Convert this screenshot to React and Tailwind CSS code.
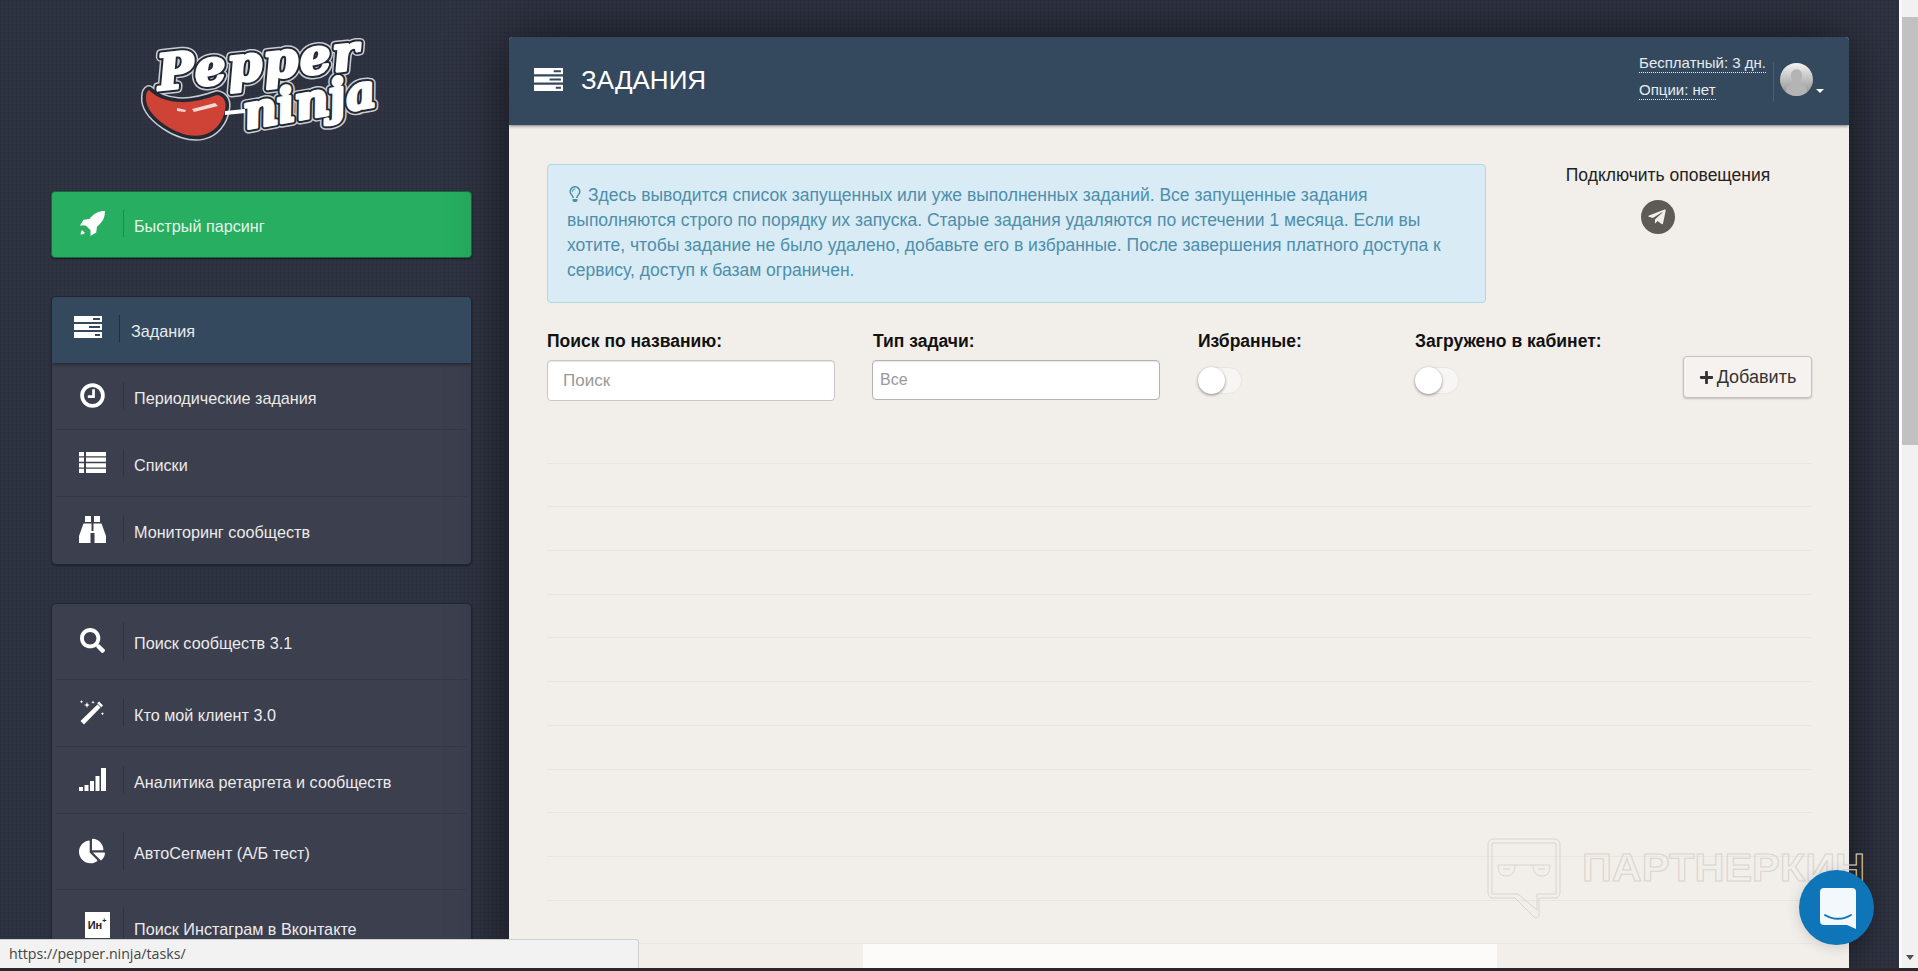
import { FaSearch, FaChartPie, FaRegLightbulb, FaTelegramPlane, FaPlus } from 'react-icons/fa';

const font = { fontFamily: '"Liberation Sans", Arial, sans-serif' };

// glyphicon-tasks
const TasksIcon = ({ className }) => (
    <svg viewBox="0 0 28 22" className={className} fill="currentColor">
        <path fillRule="evenodd" d="M0 0h28v6H0zM19 2v2h7V2zM0 8h28v6H0zM15 10v2h11v-2zM0 16h28v6H0zM21 18v2h5v-2z" />
    </svg>
);

const ClockIcon = ({ className }) => (
    <svg viewBox="0 0 24 24" className={className} fill="none" stroke="currentColor">
        <circle cx="12" cy="12" r="10" strokeWidth="3.6" />
        <path d="M13 6v7H7.5" strokeWidth="2.6" />
    </svg>
);

const ListIcon = ({ className }) => (
    <svg viewBox="0 0 27 21" className={className} fill="currentColor">
        <path d="M0 0h5v4.200H0zM7 0h20v4.200H7zM0 5.600h5v4.200H0zM7 5.600h20v4.200H7zM0 11.200h5v4.200H0zM7 11.200h20v4.200H7zM0 16.800h5V21H0zM7 16.800h20V21H7z" />
    </svg>
);

const BinocularsIcon = ({ className }) => (
    <svg viewBox="0 0 27 27" className={className} fill="currentColor">
        <path d="M6 0h6v6H6zM15 0h6v6h-6zM4.500 7.500h8V15h2V7.500h8L27 20v7H15.500V17h-4v10H0v-7z" />
    </svg>
);

const RocketIcon = ({ className }) => (
    <svg viewBox="0 0 25 25" className={className} fill="currentColor">
        <path d="M25 0c-6.500 0-11.500 2.500-15.500 8L3.500 8.800 0 14.500h5.800l4.700 4.700v5.800l5.700-3.500.8-6C22.500 11.500 25 6.500 25 0zM2 19c-1 1.500-1.500 3-1.500 4.500C2 23.500 3.500 23 5 22z" />
    </svg>
);

const MagicIcon = ({ className }) => (
    <svg viewBox="0 0 25 25" className={className} fill="currentColor">
        <path d="M17.500 4.500l3 3L4 24.500l-3.500-3.500z" />
        <path d="M19 1.500l4 4-1.800 1.800-4-4z" />
        <path d="M7 2l.8 2.200L10 5l-2.200.8L7 8l-.8-2.200L4 5l2.200-.8zM1.500 0l.5 1.300 1.300.5-1.300.5-.5 1.300L1 2.300-.3 1.800 1 1.300zM13 .5l.5 1.300 1.300.5-1.300.5-.5 1.300-.5-1.300-1.300-.5 1.300-.5zM22.500 12l.5 1.300 1.300.5-1.300.5-.5 1.300-.5-1.300-1.300-.5 1.300-.5z" />
    </svg>
);

const SignalIcon = ({ className }) => (
    <svg viewBox="0 0 27 23" className={className} fill="currentColor">
        <rect x="0" y="19" width="4" height="4" />
        <rect x="5.500" y="17" width="4" height="6" />
        <rect x="11" y="13" width="4" height="10" />
        <rect x="16.500" y="8" width="4" height="15" />
        <rect x="22" y="0" width="5" height="23" />
    </svg>
);

const InstaIcon = () => (
    <div className="w-[25px] h-[26px] bg-white text-[#222] text-[11px] font-bold flex items-center justify-center ml-[10px] -mt-[3px]">
        Ин<span className="text-[7px] -mt-2">+</span>
    </div>
);

const mainRows = [
    { title: 'Периодические задания', icon: <ClockIcon className="w-[25px] h-[25px]" /> },
    { title: 'Списки', icon: <ListIcon className="w-[27px] h-[21px]" /> },
    { title: 'Мониторинг сообществ', icon: <BinocularsIcon className="w-[27px] h-[27px]" /> },
];

const toolRows = [
    { title: 'Поиск сообществ 3.1', h: 'h-[76px]', bar: 'h-[38px]', icon: <FaSearch className="w-[25px] h-[25px]" /> },
    { title: 'Кто мой клиент 3.0', h: 'h-[67px]', bar: 'h-[27px]', icon: <MagicIcon className="w-[25px] h-[25px]" /> },
    { title: 'Аналитика ретаргета и сообществ', h: 'h-[67px]', bar: 'h-[27px]', icon: <SignalIcon className="w-[27px] h-[23px]" /> },
    { title: 'АвтоСегмент (А/Б тест)', h: 'h-[76px]', bar: 'h-[38px]', icon: <FaChartPie className="w-[26px] h-[26px]" /> },
    { title: 'Поиск Инстаграм в Вконтакте', h: 'h-[76px]', bar: 'h-[38px]', icon: <InstaIcon /> },
];

const Row = ({ title, icon, h = 'h-[67px]', bar = 'h-[27px]', last }) => (
    <div className={`${h} flex items-center pl-[20px] relative`}>
        <div className="w-[40px] flex justify-center text-white -mt-[3px]">{icon}</div>
        <div className={`${bar} w-px bg-[#31333f] ml-[11px] -mt-[3px]`}></div>
        <span className="ml-[10px] pt-[3px] text-[16.2px] text-[#ebebeb]">{title}</span>
        {!last && <div className="absolute left-[4px] right-[4px] bottom-0 h-px bg-[#343745]"></div>}
    </div>
);

const Sidebar = () => (
    <aside className="w-[509px] shrink-0 pl-[51px] pr-[37px] pt-[30px] overflow-hidden">
        <div className="h-[120px] ml-[79px] mb-[41px]">
            <svg viewBox="0 0 260 120" className="w-[260px] h-[120px]" style={{ fontFamily: '"DejaVu Serif", serif' }}>
                <defs>
                    <text id="logo-pepper" x="29" y="60" fontSize="49" fontWeight="700" fontStyle="italic" transform="rotate(-6 29 60)" textLength="202">Pepper</text>
                    <text id="logo-ninja" x="116" y="99" fontSize="47" fontWeight="700" fontStyle="italic" transform="rotate(-10 116 99)" textLength="134">ninja</text>
                    <path id="logo-chili" d="M19 60C25 66 34 71 48 72C62 73 76 69 87 65C94 66 97 72 95 80C93 92 85 102 73 105C60 108 45 102 35 95C25 88 15 78 16 67C16 63 17 61 19 60Z" />
                </defs>
                <g stroke="#c9cdd3" strokeWidth="10" strokeLinejoin="round" fill="#c9cdd3">
                    <use href="#logo-pepper" /><use href="#logo-ninja" /><use href="#logo-chili" />
                </g>
                <g stroke="#232835" strokeWidth="7" strokeLinejoin="round" fill="#232835">
                    <use href="#logo-pepper" /><use href="#logo-ninja" /><use href="#logo-chili" />
                </g>
                <use href="#logo-chili" fill="#cf4337" />
                <g fill="#fff" stroke="#fff" strokeWidth="3" strokeLinejoin="round">
                    <use href="#logo-pepper" /><use href="#logo-ninja" />
                </g>
                <path d="M47 78l9 2-1 2-8-1zM62 79l23-6 3 3-24 6z" fill="#f6d9d2" />
                <path d="M95 81l20-2v4l-20 2z" fill="#fff" />
            </svg>
        </div>

        <div className="h-[67px] rounded-[4px] bg-[#27ae60] border border-[#17683a] shadow-[0_1px_2px_rgba(0,0,0,0.5)] flex items-center pl-[20px]">
            <div className="w-[40px] flex justify-center text-white -mt-[3px]"><RocketIcon className="w-[25px] h-[25px]" /></div>
            <div className="h-[27px] w-px bg-[#1c8a4b] ml-[11px] -mt-[3px]"></div>
            <span className="ml-[10px] pt-[4px] text-[16.2px] text-[#e4f5ea]">Быстрый парсинг</span>
        </div>

        <div className="mt-[38px] rounded-[5px] border border-[#23262f] bg-[#3c3f4e] shadow-[0_1px_2px_rgba(0,0,0,0.4)] overflow-hidden">
            <div className="h-[66px] bg-[#34495e] flex items-center pl-[22px] shadow-[0_2px_3px_rgba(0,0,0,0.35)] relative">
                <TasksIcon className="w-[28px] h-[22px] text-white -mt-[6px]" />
                <div className="h-[27px] w-px bg-[#1f2f42] ml-[17px] -mt-[3px]"></div>
                <span className="ml-[11px] pt-[3px] text-[16.2px] text-[#ebebeb]">Задания</span>
            </div>
            {mainRows.map((r, i) => (
                <Row key={r.title} {...r} last={i === mainRows.length - 1} />
            ))}
        </div>

        <div className="mt-[38px] rounded-[5px] border border-[#23262f] bg-[#3c3f4e] shadow-[0_1px_2px_rgba(0,0,0,0.4)]">
            {toolRows.map((r, i) => (
                <Row key={r.title} {...r} last={i === toolRows.length - 1} />
            ))}
        </div>
    </aside>
);

const Toggle = () => (
    <div className="mt-[15px] w-[44px] h-[27px] rounded-full bg-[#f8f6f4] border border-[#e9e6e2] relative">
        <div className="absolute -left-px -top-px w-[27px] h-[27px] rounded-full bg-white shadow-[0_1px_3px_rgba(0,0,0,0.45)]"></div>
    </div>
);

const Panel = () => (
    <main className="w-[1340px] mt-[37px] rounded-t-[4px] flex flex-col shadow-[0_0_55px_rgba(0,0,0,0.6)] bg-[#f2eeea] overflow-hidden">
        <header className="h-[88px] shrink-0 bg-[#34495e] flex items-center pl-[25px] pr-[25px] shadow-[0_1px_3px_rgba(0,0,0,0.5)] z-10">
            <TasksIcon className="w-[29px] h-[23px] text-white -mt-[3px]" />
            <h1 className="ml-[18px] text-[26px] text-white -mt-[1px]">ЗАДАНИЯ</h1>
            <div className="ml-auto -mt-[9px] flex flex-col gap-[7px] text-[15px] text-[#e6ebef] leading-[19px]">
                <span className="border-b border-dotted border-[#dfe5ea] self-start">Бесплатный: 3 дн.</span>
                <span className="border-b border-dotted border-[#dfe5ea] self-start">Опции: нет</span>
            </div>
            <div className="w-px h-[39px] bg-[#48607a] ml-[7px]"></div>
            <div className="ml-[6px] w-[33px] h-[33px] rounded-full overflow-hidden bg-gradient-to-b from-[#f4f4f4] to-[#8d8d8d] -mt-[3px]">
                <svg viewBox="0 0 32 32" className="w-full h-full">
                    <path d="M16 6c3.600 0 5.600 3 5.400 6.600-.2 2.700-1.200 4.800-2.400 6 .2 1.600 1.600 2.400 4 3.300 2 .7 3 2 3 4.600V32H6v-5.500c0-2.600 1-3.900 3-4.600 2.400-.9 3.800-1.700 4-3.300-1.200-1.200-2.200-3.300-2.400-6C10.400 9 12.400 6 16 6z" fill="#b4b4b4" />
                </svg>
            </div>
            <div className="ml-[3px] mt-[20px] w-0 h-0 border-x-[4px] border-x-transparent border-t-[4px] border-t-white"></div>
        </header>

        <div className="pl-[38px] pr-[37px] pt-[39px] flex flex-col">
            <div className="flex">
                <div className="w-[939px] h-[139px] shrink-0 rounded-[4px] bg-[#d9ebf5] border border-[#aed8e0] pl-[19px] pr-[16px] pt-[18px] text-[17.5px] leading-[25px] text-[#4d8fab]">
                    <FaRegLightbulb className="inline w-[16px] h-[16px] mr-[5px] -mt-[4px] align-middle" />
                    Здесь выводится список запущенных или уже выполненных заданий. Все запущенные задания выполняются строго по порядку их запуска. Старые задания удаляются по истечении 1 месяца. Если вы хотите, чтобы задание не было удалено, добавьте его в избранные. После завершения платного доступа к сервису, доступ к базам ограничен.
                </div>
                <div className="flex-1 flex flex-col items-center">
                    <span className="ml-[38px] text-[17.5px] text-[#222] leading-[22px]">Подключить оповещения</span>
                    <div className="mt-[14px] ml-[17px] w-[34px] h-[34px] rounded-full bg-[#5e5a55] flex items-center justify-center text-[#f2eeea]">
                        <FaTelegramPlane className="w-[20px] h-[20px] -ml-[2px]" />
                    </div>
                </div>
            </div>

            <div className="flex mt-[27px] h-[71px]">
                <div className="w-[326px] shrink-0">
                    <label className="block font-bold text-[17.5px] leading-[22px] mb-[8px] text-[#111]">Поиск по названию:</label>
                    <input placeholder="Поиск" className="w-[288px] h-[41px] rounded-[4px] bg-white border border-[#c9c6c3] shadow-[inset_0_1px_1px_rgba(0,0,0,0.1)] px-[15px] text-[17px] placeholder:text-[#999] outline-none" />
                </div>
                <div className="w-[325px] shrink-0">
                    <label className="block font-bold text-[17.5px] leading-[22px] mb-[8px] text-[#111]">Тип задачи:</label>
                    <input placeholder="Все" className="-ml-px w-[288px] h-[40px] rounded-[4px] bg-white border border-[#b5b3b1] shadow-[inset_0_1px_1px_rgba(0,0,0,0.1)] px-[7px] text-[16px] placeholder:text-[#999] outline-none" />
                </div>
                <div className="w-[217px] shrink-0">
                    <label className="block font-bold text-[17.5px] leading-[22px] mb-[8px] text-[#111]">Избранные:</label>
                    <Toggle />
                </div>
                <div className="flex-1">
                    <label className="block font-bold text-[17.5px] leading-[22px] mb-[8px] text-[#111]">Загружено в кабинет:</label>
                    <Toggle />
                </div>
                <button className="w-[129px] h-[42px] mt-[26px] rounded-[4px] bg-[#f5f2ef] border border-[#c5c3c0] shadow-[0_1px_2px_rgba(0,0,0,0.2)] flex items-center justify-center gap-[3px] text-[18px] text-[#333]">
                    <FaPlus className="w-[15px] h-[15px]" /> Добавить
                </button>
            </div>

            <div className="mt-[19px]">
                {Array.from({ length: 12 }).map((_, i) => (
                    <div key={i} className="h-[43.7px] border-b border-[#e9e5e1]"></div>
                ))}
            </div>
            <div className="w-[634px] h-[40px] mx-auto bg-[#fdfbf9]"></div>
        </div>
    </main>
);

export default function App() {
    return (
        <div className="relative w-full h-[971px] overflow-hidden flex flex-col bg-[#2a2a2a]" style={font}>
            <div className="flex flex-1 min-h-0">
                <div className="flex-1 flex overflow-hidden bg-[#2f3442] bg-[linear-gradient(rgba(0,0,0,0.05)_1px,transparent_1px),linear-gradient(90deg,rgba(0,0,0,0.05)_1px,transparent_1px)] bg-[length:4px_4px]">
                    <Sidebar />
                    <Panel />
                </div>
                {/* scrollbar */}
                <div className="w-[19px] shrink-0 bg-[#f1f1f1] border-l-[3px] border-[#fafafa] flex flex-col">
                    <div className="h-[428px] mt-[17px] bg-[#c1c1c1]"></div>
                    <div className="mt-auto mb-[8px] mx-auto w-0 h-0 border-x-[4px] border-x-transparent border-t-[5px] border-t-[#505050]"></div>
                </div>
            </div>
            <div className="h-[3px] shrink-0 bg-[#2a2a2a]"></div>

            {/* watermark */}
            <svg viewBox="0 0 380 82" className="absolute left-[1487px] top-[838px] w-[380px] h-[82px]" fill="none" stroke="#d8d4d0" strokeWidth="1">
                <path d="M6 1h62a5 5 0 0 1 5 5v49a5 5 0 0 1-5 5H52v17a3 3 0 0 1-5 2L28 60H6a5 5 0 0 1-5-5V6a5 5 0 0 1 5-5z" />
                <path d="M5 5h64v51H50v16L31 56H5z" />
                <path d="M11 27h52M11 27c0 7 2 11 8 11s9-4 9-11M46 27c0 7 3 11 9 11s8-4 8-11M16 31h7M51 31h7" />
                <text x="95" y="43" fontSize="39" fontWeight="700" textLength="283" lengthAdjust="spacingAndGlyphs" style={font}>ПАРТНЕРКИН</text>
            </svg>

            {/* status bar */}
            <div className="absolute left-0 bottom-[3px] w-[639px] h-[29px] bg-[#f2f2f2] border-t border-r border-[#d0d0d0] rounded-tr-[3px] flex items-center pl-[9px] text-[14.2px] text-[#444]" style={{ fontFamily: '"Open Sans", sans-serif' }}>
                https://pepper.ninja/tasks/
            </div>

            {/* chat button */}
            <div className="absolute left-[1799px] top-[870px] w-[75px] h-[75px] rounded-full bg-[#0e76b8] shadow-[0_2px_14px_rgba(0,0,0,0.15)] flex items-center justify-center">
                <svg viewBox="0 0 36 41" className="w-[36px] h-[41px] ml-[2px] mt-[2px]">
                    <path d="M4 0h28a4 4 0 0 1 4 4v37l-9-4H4a4 4 0 0 1-4-4V4a4 4 0 0 1 4-4z" fill="#f2f8fc" />
                    <path d="M5 27c8 5 18 5 26 0" fill="none" stroke="#0e76b8" strokeWidth="1.8" strokeLinecap="round" />
                </svg>
            </div>
        </div>
    );
}
